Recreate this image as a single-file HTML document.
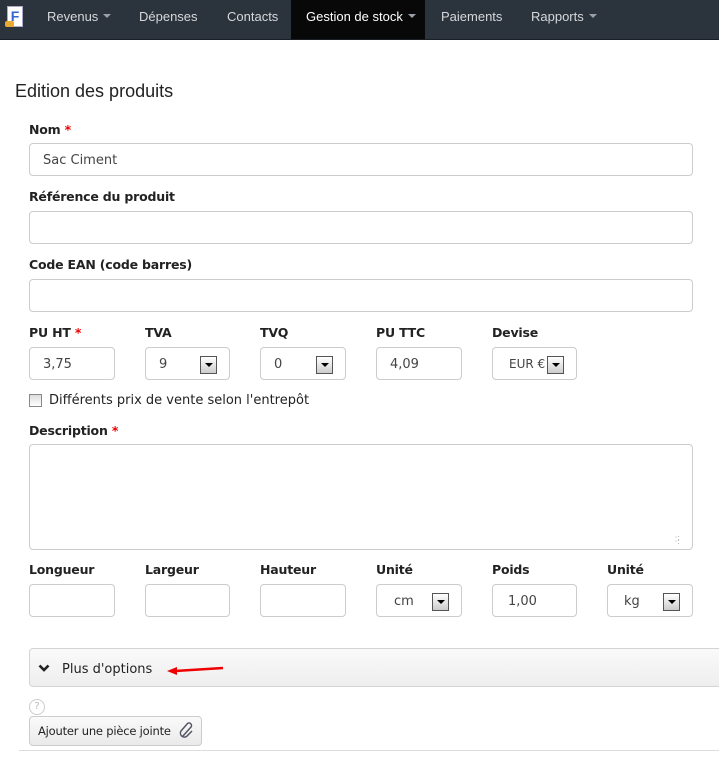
<!DOCTYPE html>
<html><head><meta charset="utf-8"><style>
*{box-sizing:border-box;margin:0;padding:0}
body{width:719px;height:759px;background:#fff;position:relative;overflow:hidden;font-family:"DejaVu Sans",Verdana,sans-serif;}
.nav{position:absolute;left:0;top:0;width:719px;height:40px;background:#2b333d;border-bottom:1px solid #1a1f25}
.nav span{position:absolute;top:9px;font:13px "Liberation Sans",Arial,sans-serif;color:#d6d8db}
.car{display:inline-block;width:0;height:0;border-left:4px solid transparent;border-right:4px solid transparent;border-top:4px solid #9aa0a6;margin-left:5px;vertical-align:3px}
.act{position:absolute;left:291px;top:0;width:134px;height:39px;background:#080808}
h1{position:absolute;left:15px;top:81px;font:400 18px "Liberation Sans",Arial,sans-serif;color:#222}
.l{position:absolute;font-weight:bold;font-size:12.5px;color:#222;letter-spacing:-0.2px}
.l i{color:#e00;font-style:normal}
.in{position:absolute;border:1px solid #ccc;border-radius:4px;background:#fff;font-size:13px;color:#444;padding-left:13px;line-height:33px;height:33px}
.ar{position:absolute;right:12px;top:8px;width:17px;height:18px;border:1px solid #555;background:linear-gradient(#fff,#ccc)}
.ar:after{content:"";position:absolute;left:4px;top:6px;border-left:4px solid transparent;border-right:4px solid transparent;border-top:4px solid #000}
</style></head><body>
<div class="nav">
<div class="act"></div>
<div style="position:absolute;left:7px;top:6px;width:16px;height:21px;background:#fff;border:1px solid #aac;font:bold 14px 'Liberation Sans';color:#36c;text-align:center;line-height:19px">F</div>
<div style="position:absolute;left:5px;top:21px;width:9px;height:6px;background:#e9a830;border-radius:2px"></div>
<span style="left:47px">Revenus<b class="car"></b></span>
<span style="left:139px">Dépenses</span>
<span style="left:227px">Contacts</span>
<span style="left:306px;color:#fff">Gestion de stock<b class="car"></b></span>
<span style="left:441px">Paiements</span>
<span style="left:531px">Rapports<b class="car"></b></span>
</div>
<h1>Edition des produits</h1>
<div class="l" style="left:29px;top:122px">Nom <i>*</i></div>
<div class="in" style="left:29px;top:143px;width:664px">Sac Ciment</div>
<div class="l" style="left:29px;top:189px">Référence du produit</div>
<div class="in" style="left:29px;top:211px;width:664px"></div>
<div class="l" style="left:29px;top:257px">Code EAN (code barres)</div>
<div class="in" style="left:29px;top:279px;width:664px"></div>

<div class="l" style="left:29px;top:325px">PU HT <i>*</i></div>
<div class="l" style="left:145px;top:325px">TVA</div>
<div class="l" style="left:260px;top:325px">TVQ</div>
<div class="l" style="left:376px;top:325px">PU TTC</div>
<div class="l" style="left:492px;top:325px">Devise</div>
<div class="in" style="left:29px;top:347px;width:86px">3,75</div>
<div class="in" style="left:145px;top:347px;width:85px">9<div class="ar"></div></div>
<div class="in" style="left:260px;top:347px;width:86px">0<div class="ar"></div></div>
<div class="in" style="left:376px;top:347px;width:86px">4,09</div>
<div class="in" style="left:492px;top:347px;width:85px;padding-left:16px;font-size:12px">EUR €<div class="ar" style="right:12px"></div></div>

<div style="position:absolute;left:29px;top:394px;width:13px;height:13px;border:1px solid #888;background:linear-gradient(#ddd,#fff)"></div>
<div style="position:absolute;left:49px;top:393px;font-size:13px;color:#222">Différents prix de vente selon l'entrepôt</div>

<div class="l" style="left:29px;top:423px">Description <i>*</i></div>
<div class="in" style="left:29px;top:444px;width:664px;height:106px"><div style="position:absolute;right:12px;bottom:5px;font-size:8px;color:#aaa;line-height:4px">·:<br>·:</div></div>

<div class="l" style="left:29px;top:562px">Longueur</div>
<div class="l" style="left:145px;top:562px">Largeur</div>
<div class="l" style="left:260px;top:562px">Hauteur</div>
<div class="l" style="left:376px;top:562px">Unité</div>
<div class="l" style="left:492px;top:562px">Poids</div>
<div class="l" style="left:607px;top:562px">Unité</div>
<div class="in" style="left:29px;top:584px;width:86px"></div>
<div class="in" style="left:145px;top:584px;width:85px"></div>
<div class="in" style="left:260px;top:584px;width:86px"></div>
<div class="in" style="left:376px;top:584px;width:86px;padding-left:17px">cm<div class="ar"></div></div>
<div class="in" style="left:492px;top:584px;width:85px;padding-left:15px">1,00</div>
<div class="in" style="left:607px;top:584px;width:86px;padding-left:16px">kg<div class="ar"></div></div>

<div style="position:absolute;left:29px;top:648px;width:700px;height:39px;border:1px solid #d4d4d4;border-radius:4px;background:linear-gradient(#fafafa,#eee)"></div>
<svg style="position:absolute;left:38px;top:664px" width="12" height="9"><path d="M1.5 1.5 L6 6 L10.5 1.5" stroke="#222" stroke-width="2.6" fill="none"/></svg>
<div style="position:absolute;left:62px;top:662px;font-size:13px;color:#222">Plus d'options</div>
<svg style="position:absolute;left:165px;top:664px" width="60" height="12"><path d="M58 4 L10 7" stroke="#e00" stroke-width="2.5"/><path d="M2 7 L12 3 L12 11Z" fill="#e00"/></svg>

<div style="position:absolute;left:29px;top:699px;width:16px;height:16px;border:1px solid #ccc;border-radius:50%;font-size:10px;color:#bbb;text-align:center;line-height:14px">?</div>
<div style="position:absolute;left:29px;top:716px;width:173px;height:30px;border:1px solid #ccc;border-radius:4px;background:linear-gradient(#fafafa,#eaeaea);font-size:11.5px;color:#222;padding-left:8px;line-height:29px;letter-spacing:-0.2px">Ajouter une pièce jointe</div>
<svg style="position:absolute;left:178px;top:722px" width="18" height="18"><path d="M5 14 L13 5 a2.5 2.5 0 0 0 -3.5 -3.5 L3 9 a4 4 0 0 0 5.5 5.5 L14 9" stroke="#556" stroke-width="1.5" fill="none"/></svg>
<div style="position:absolute;left:19px;top:750px;width:700px;height:1px;background:#ddd"></div>
</body></html>
